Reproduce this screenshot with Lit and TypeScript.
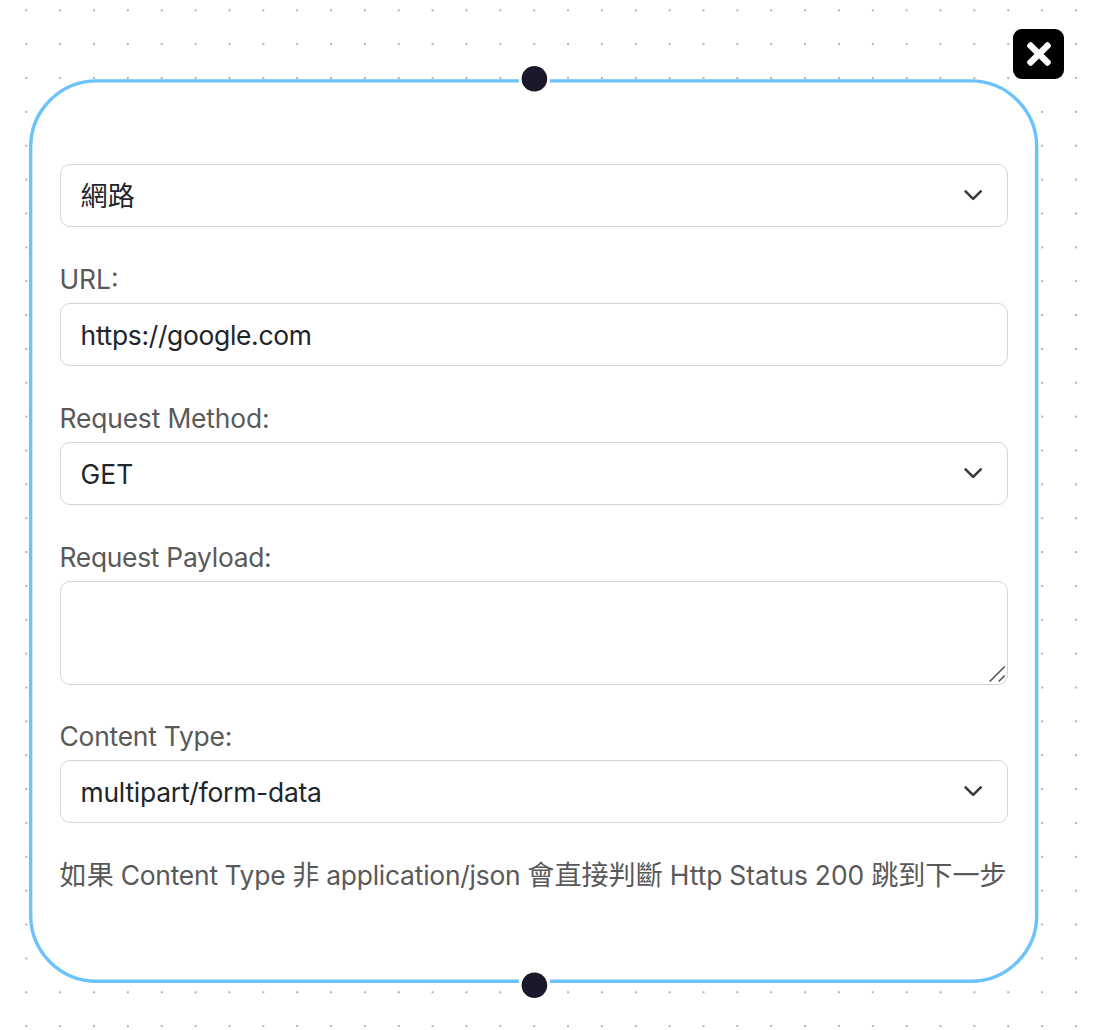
import { LitElement, html, css, svg } from "lit";
import { customElement, property } from "lit/decorators.js";
import { styleMap } from "lit/directives/style-map.js";

const chevron = html`<svg class="chevron" viewBox="0 0 16 16" fill="none">
  <path d="m2 5 6 6 6-6" stroke="#343a40" stroke-width="2" stroke-linecap="round" stroke-linejoin="round" />
</svg>`;

@customElement("flow-field")
export class FlowField extends LitElement {
  @property() label = "";
  @property() value = "";
  @property() kind: "select" | "input" | "textarea" = "input";
  @property({ type: Number }) labelTracking = 0;
  @property({ type: Number }) valueTracking = 0;

  static styles = css`
    :host {
      display: block;
      font-family: Inter, "Noto Sans CJK TC", sans-serif;
      font-size: 26.4px;
    }
    .label {
      box-sizing: border-box;
      height: 40px;
      line-height: 32px;
      color: #595959;
      white-space: nowrap;
      margin-left: -0.5px;
    }
    .control {
      box-sizing: border-box;
      height: 63px;
      display: flex;
      align-items: center;
      justify-content: space-between;
      padding: 2px 24px 0 19.6px;
      border: 1px solid #d2d6dc;
      border-radius: 10px;
      background: #fff;
      color: #212529;
      white-space: nowrap;
    }
    .cjk {
      font-size: 27.1px;
      padding-bottom: 4px;
    }
    .chevron {
      width: 20.3px;
      height: 20.3px;
      margin-top: -2px;
    }
    .textarea {
      height: 104px;
      margin-bottom: -1px;
      align-items: flex-end;
      padding: 0 0 1px 0;
      justify-content: flex-end;
    }
    .grip {
      width: 18px;
      height: 18px;
    }
  `;

  render() {
    return html`
      ${this.label
        ? html`<div class="label">
            <span style=${styleMap({ letterSpacing: `${this.labelTracking}px` })}>${this.label}</span>
          </div>`
        : ""}
      ${this.kind === "textarea"
        ? html`<div class="control textarea">
            <svg class="grip" viewBox="0 0 18 18" stroke="#555" stroke-width="1.7" stroke-linecap="round">
              <path d="M1.2 16 15.2 2M10.2 16l5-5" />
            </svg>
          </div>`
        : html`<div class="control">
            <span
              class=${/[a-z]/i.test(this.value) ? "latin" : "cjk"}
              style=${styleMap({ letterSpacing: `${this.valueTracking}px` })}
              >${this.value}</span
            >
            ${this.kind === "select" ? chevron : ""}
          </div>`}
    `;
  }
}

@customElement("app-root")
export class AppRoot extends LitElement {
  static styles = css`
    :host {
      display: block;
      font-family: Inter, "Noto Sans CJK TC", sans-serif;
    }
    .canvas {
      position: relative;
      width: 1108px;
      height: 1030px;
      overflow: hidden;
      background: #fff;
    }
    .dots {
      position: absolute;
      inset: 0;
      width: 100%;
      height: 100%;
    }
    .node {
      position: absolute;
      left: 29.3px;
      top: 79.3px;
      width: 1009.4px;
      height: 903.8px;
    }
    .frame {
      position: absolute;
      inset: 0;
      width: 100%;
      height: 100%;
      overflow: visible;
    }
    .form {
      position: relative;
      display: flex;
      flex-direction: column;
      gap: 36px;
      padding: 84.7px 30.4px 0 30.7px;
    }
    .note {
      font-size: 26.4px;
      height: 34px;
      line-height: 34px;
      margin-top: -1px;
      margin-left: -0.4px;
      color: #595959;
      white-space: nowrap;
      word-spacing: -0.55px;
    }
    .han {
      font-size: 27.1px;
    }
    .tight {
      letter-spacing: -0.22px;
    }
    .close {
      position: absolute;
      left: 1013.4px;
      top: 28.9px;
      width: 50.6px;
      height: 50.6px;
      padding: 0;
      border: 0;
      border-radius: 9px;
      background: #000;
      display: flex;
      align-items: center;
      justify-content: center;
    }
    .cross {
      width: 24px;
      height: 24px;
    }
  `;

  render() {
    return html`
      <div class="canvas">
        <svg class="dots">
          <defs>
            <pattern id="grid" x="9.37" y="-6.63" width="33.86" height="33.86" patternUnits="userSpaceOnUse">
              <circle cx="16.93" cy="16.93" r="0.95" fill="#91919a" />
            </pattern>
          </defs>
          <rect width="100%" height="100%" fill="url(#grid)" />
        </svg>
        <div class="node">
          <svg class="frame" viewBox="0 0 1009.4 903.8">
            <rect x="1.7" y="1.9" width="1006" height="900.4" rx="66" fill="#fff" stroke="#6cc3fb" stroke-width="3.4" />
            ${[-0.3, 906.2].map(
              (y) => svg`<rect x="489.9" y=${y - 13} width="31" height="26" rx="8" fill="#fff" />
                <circle cx="505.4" cy=${y} r="12.8" fill="#1a192b" />`
            )}
          </svg>
          <div class="form">
            <flow-field kind="select" value="網路"></flow-field>
            <flow-field label="URL:" value="https://google.com" .valueTracking=${-0.3}></flow-field>
            <flow-field kind="select" label="Request Method:" value="GET" .labelTracking=${-0.15}></flow-field>
            <flow-field kind="textarea" label="Request Payload:" .labelTracking=${-0.28}></flow-field>
            <flow-field
              kind="select"
              label="Content Type:"
              value="multipart/form-data"
              .labelTracking=${-0.22}
              .valueTracking=${-0.22}
            ></flow-field>
            <div class="note">
              <span class="han">如果</span> <span class="tight">Content Type</span> <span class="han">非</span>
              <span class="tight">application/json</span> <span class="han">會直接判斷</span> Http Status 200
              <span class="han">跳到下一步</span>
            </div>
          </div>
        </div>
        <button class="close" aria-label="close">
          <svg class="cross" viewBox="0 80 352 352" fill="#fff">
            <path d="M242.72 256l100.07-100.07c12.28-12.28 12.28-32.19 0-44.48l-22.24-22.24c-12.28-12.28-32.19-12.28-44.48 0L176 189.28 75.93 89.21c-12.28-12.28-32.19-12.28-44.48 0L9.21 111.45c-12.28 12.28-12.28 32.19 0 44.48L109.28 256 9.21 356.07c-12.28 12.28-12.28 32.19 0 44.48l22.24 22.24c12.28 12.28 32.2 12.28 44.48 0L176 322.72l100.07 100.07c12.28 12.28 32.2 12.28 44.48 0l22.24-22.24c12.28-12.28 12.28-32.19 0-44.48L242.72 256z" />
          </svg>
        </button>
      </div>
    `;
  }
}
